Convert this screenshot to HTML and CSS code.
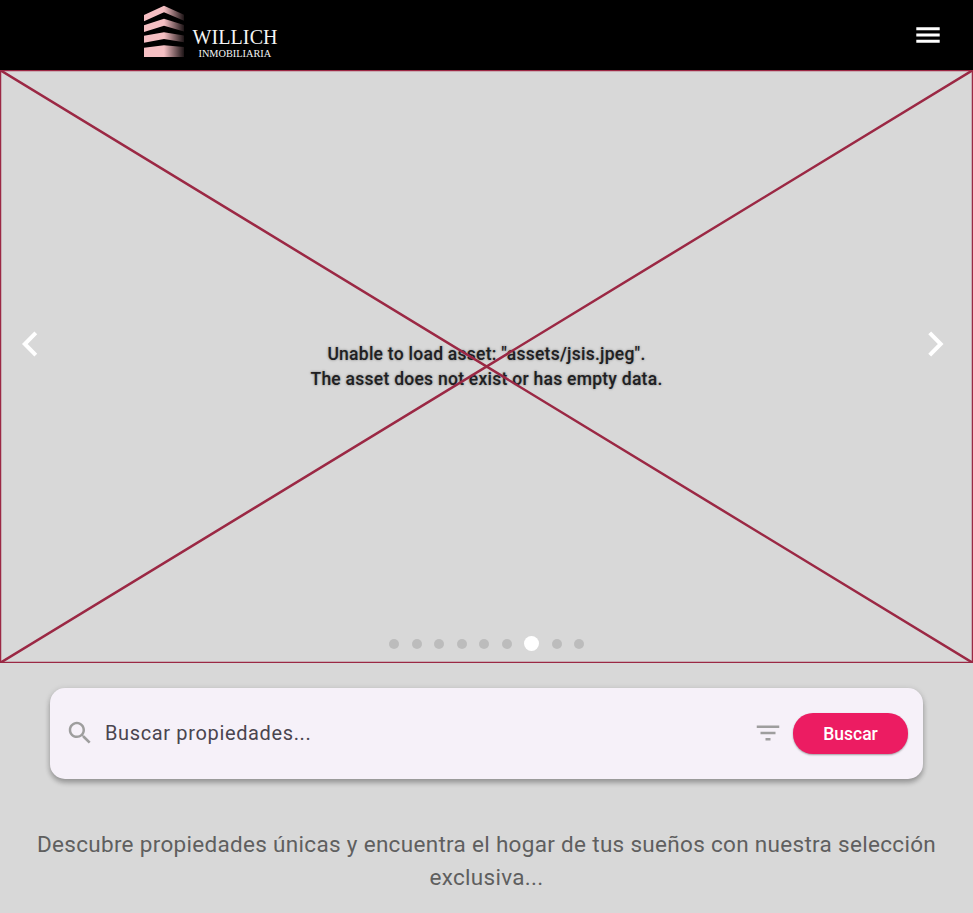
FILE: index.html
```html
<!DOCTYPE html>
<html lang="es">
<head>
<meta charset="utf-8">
<title>Willich Inmobiliaria</title>
<link rel="stylesheet" href="styles.css">
</head>
<body>
<header class="topbar">
  <div class="brand">
    <svg class="brand-mark" width="40" height="52" viewBox="0 0 40 52">
      <defs><linearGradient id="fade" gradientUnits="userSpaceOnUse" x1="0" y1="0" x2="40" y2="0">
        <stop offset="0" stop-color="#f5bfc3"/><stop offset=".5" stop-color="#f5bfc3"/><stop offset="1" stop-color="#1d1416"/>
      </linearGradient></defs>
      <path fill="url(#fade)" d="M0 10 20 .7 40 9.700V15.700L20 7.200 0 16.300ZM0 20.300 20 13.800 40 20V26.500L20 20.800 0 27ZM0 30.800 20 27.200 40 30.500V37.200L20 34 0 37.700ZM0 42.700 20 40.300 40 42V52H0Z"/>
    </svg>
    <div class="brand-text">
      <span class="brand-name">WILLICH</span>
      <span class="brand-sub">INMOBILIARIA</span>
    </div>
  </div>
  <svg class="menu" width="32" height="32" viewBox="0 0 32 32"><path fill="#fff" d="M4.300 8.200h23.400v3H4.300zm0 6.250h23.400v3H4.300zm0 6.250h23.400v3H4.300z"/></svg>
</header>
<main>
  <section class="carousel">
    <svg class="cross" width="973" height="593" viewBox="0 0 973 593">
      <path d="M0 0 973 593M973 0 0 593"/>
      <rect x="0" y="0" width="973" height="593"/>
    </svg>
    <svg class="arrow" width="60" height="40" viewBox="0 0 60 40"><path d="M35.800 8.800 24.800 20 35.800 31.200"/></svg>
    <p class="error">Unable to load asset: "assets/jsis.jpeg".<br>The asset does not exist or has empty data.</p>
    <svg class="arrow" width="60" height="40" viewBox="0 0 60 40"><path d="M16.700 8.800 27.700 20 16.700 31.200"/></svg>
    <div class="dots"><i></i><i></i><i></i><i></i><i></i><i></i><i class="active"></i><i></i><i></i></div>
  </section>
  <section class="search">
    <svg class="icon" width="30" height="30" viewBox="0 0 24 24"><path d="M15.500 14h-.79l-.28-.27C15.410 12.590 16 11.110 16 9.500 16 5.910 13.090 3 9.500 3S3 5.910 3 9.500 5.910 16 9.500 16c1.610 0 3.090-.59 4.230-1.570l.27.28v.79l5 4.990L20.490 19zm-6 0C7.010 14 5 11.990 5 9.500S7.010 5 9.500 5 14 7.010 14 9.500 11.990 14 9.500 14"/></svg>
    <span class="hint">Buscar propiedades...</span>
    <svg class="icon" width="30" height="30" viewBox="0 0 24 24"><path d="M10 18h4v-2h-4zM3 6v2h18V6zm3 7h12v-2H6z"/></svg>
    <button class="submit">Buscar</button>
  </section>
  <p class="tagline">Descubre propiedades únicas y encuentra el hogar de tus sueños con nuestra selección exclusiva...</p>
</main>
</body>
</html>
```
FILE: styles.css
```css
* { box-sizing: border-box; }
body { margin: 0; height: 913px; overflow: hidden; background: #d8d8d8; font-family: Roboto, sans-serif; }
svg { display: block; flex: none; }
p { margin: 0; }
.topbar { height: 70px; background: #000; display: flex; justify-content: space-between; align-items: flex-start; padding: 5px 29px 0 144px; }
.brand { display: flex; gap: 8.500px; }
.brand-text { display: flex; flex-direction: column; color: #f4f4f4; font-family: "Liberation Serif", serif; padding-top: 21px; }
.brand-name { font-size: 20px; line-height: 22px; letter-spacing: 0.1px; }
.brand-sub { font-size: 10.300px; line-height: 11px; padding-left: 6px; }
.menu { margin-top: 14px; }
.carousel { position: relative; height: 593px; display: flex; justify-content: space-between; align-items: center; }
.cross { position: absolute; inset: 0; fill: none; stroke: #9b2844; stroke-width: 2.500px; }
.arrow { position: relative; top: -22.500px; fill: none; stroke: #fff; stroke-width: 4px; }
.error { font-size: 17.500px; line-height: 25px; font-weight: 500; letter-spacing: 0.260px; color: #202022; text-align: center; text-shadow: 0 0 2.500px rgba(0,0,0,.45); white-space: nowrap; }
.dots { position: absolute; left: 0; right: 0; bottom: 12px; display: flex; justify-content: center; align-items: center; gap: 12.500px; }
.dots i { width: 10px; height: 10px; border-radius: 50%; background: #bcbcbc; }
.dots .active { width: 15px; height: 15px; background: #fff; }
.search { height: 90.500px; margin: 25px 50px 0; padding: 0 15px; background: #f6f1f9; border-radius: 15px; display: flex; align-items: center; box-shadow: 0 4px 5px rgba(0,0,0,.24), 0 1px 6px rgba(0,0,0,.14); }
.icon { fill: #9e9e9e; }
.hint { flex: 1; margin-left: 10px; font-size: 20px; letter-spacing: 0.640px; color: #4a454f; }
.submit { width: 115px; height: 40.500px; margin-left: 10px; padding: 1.500px 0 0; border: 0; border-radius: 20px; background: #ec1c62; color: #fff; font: 500 17.500px Roboto, sans-serif; box-shadow: 0 1px 2px rgba(0,0,0,.35); }
.tagline { margin: 49.500px 25px 0; text-align: center; font-size: 22.500px; line-height: 33px; letter-spacing: 0.310px; color: #5f5f5f; }
```
